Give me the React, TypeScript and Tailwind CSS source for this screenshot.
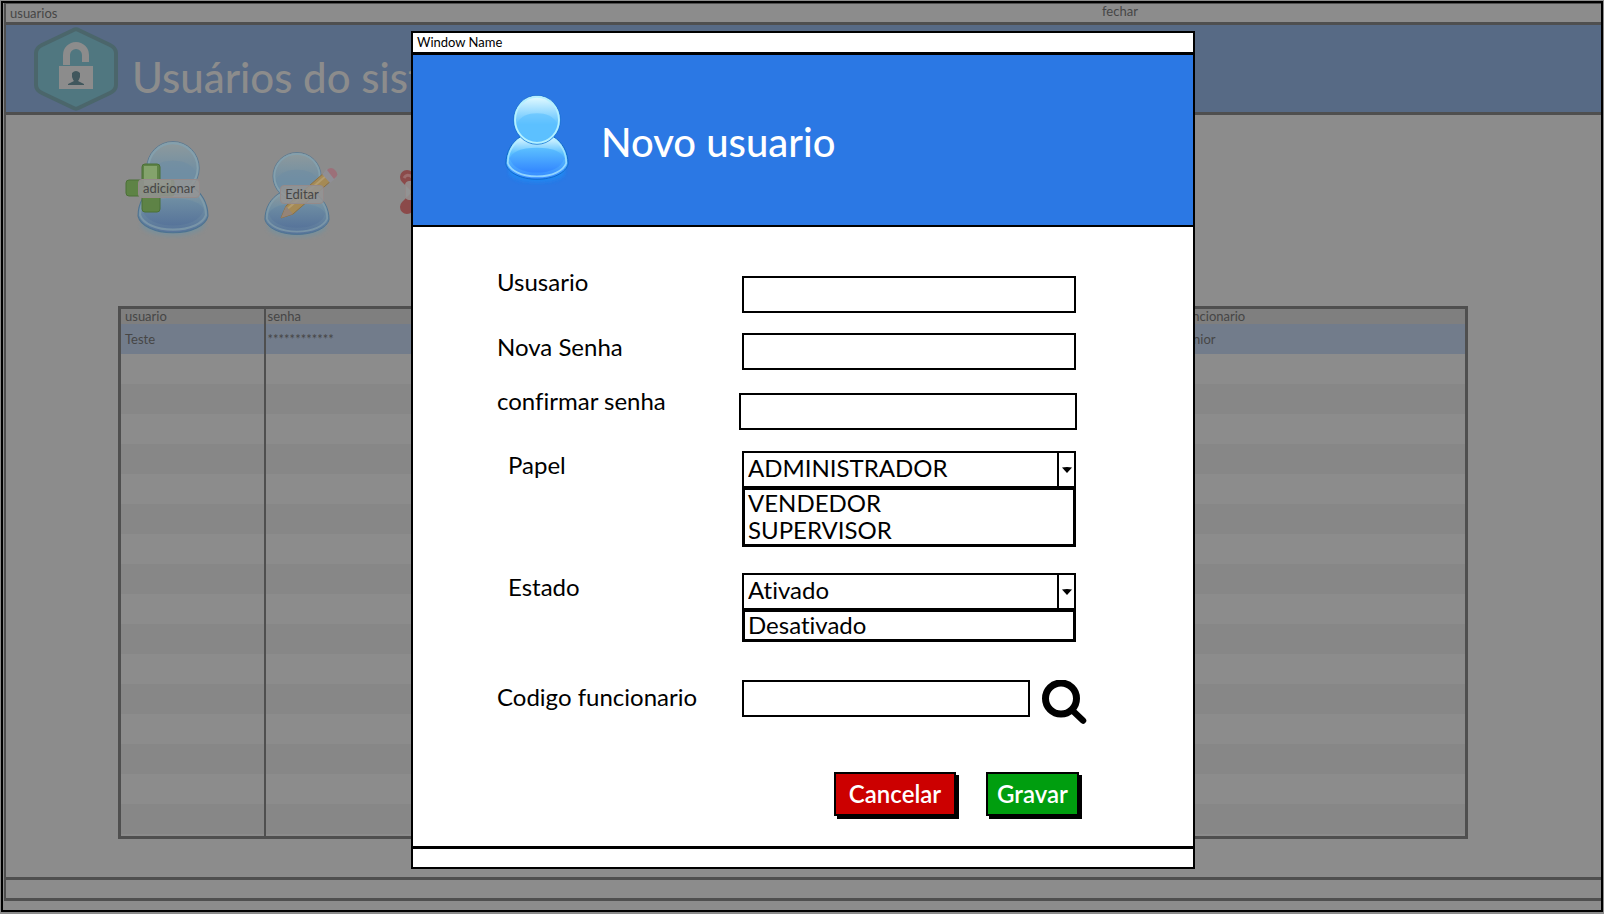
import { useId, type ReactNode } from "react";

type PersonProps = { className: string; muted?: boolean };

function Person({ className, muted = false }: PersonProps) {
  const id = useId();
  const c = muted
    ? { top: "#8f9a9c", mid: "#6f8ea3", low: "#57749a", edge: "#4d7391", rim: "#84a0ad", glow: "#74919e" }
    : { top: "#e8fdff", mid: "#5cc0ff", low: "#3286ff", edge: "#0a68c8", rim: "#b4f0ff", glow: "#1d8cf5" };
  return (
    <svg viewBox="0 0 70 94" className={className} aria-hidden="true" preserveAspectRatio="none">
      <defs>
        <linearGradient id={`${id}h`} x1="0" y1="0" x2="0" y2="1">
          <stop offset="0" stopColor={c.top} />
          <stop offset="0.6" stopColor={c.mid} />
          <stop offset="1" stopColor={c.mid} />
        </linearGradient>
        <linearGradient id={`${id}b`} x1="0" y1="0" x2="0" y2="1">
          <stop offset="0" stopColor={c.top} />
          <stop offset="0.4" stopColor={c.mid} />
          <stop offset="1" stopColor={c.low} />
        </linearGradient>
        <filter id={`${id}g`} x="-20%" y="-20%" width="140%" height="150%">
          <feGaussianBlur stdDeviation="2" />
        </filter>
      </defs>
      <ellipse cx="35" cy="80" rx="31" ry="11" fill={c.glow} opacity="0.8" filter={`url(#${id}g)`} />
      <path
        d="M18 43C7 49 1 60 1 72C3 81 17 88 35 88C53 88 67 81 69 72C69 60 63 49 52 43Z"
        fill={`url(#${id}b)`}
        stroke={c.edge}
        strokeWidth="1"
      />
      <path
        d="M18 45C8 51 3 61 3 71C6 79 18 85 35 85C52 85 64 79 67 71C67 61 62 51 52 45"
        fill="none"
        stroke={c.rim}
        strokeWidth="2"
        opacity="0.7"
      />
      <path d="M5 66C7 60 17 55 35 55C53 55 63 60 65 66C62 76 50 81 35 81C20 81 8 76 5 66Z" fill={`url(#${id}f)`} />
      <linearGradient id={`${id}f`} x1="0" y1="0" x2="0" y2="1">
        <stop offset="0" stopColor={c.mid} />
        <stop offset="1" stopColor={c.low} />
      </linearGradient>
      <circle cx="35" cy="26" r="25.5" fill={`url(#${id}h)`} stroke={c.edge} strokeWidth="0.7" />
      <circle cx="35" cy="26" r="24" fill="none" stroke={c.rim} strokeWidth="2" />
      <path d="M13 29C18 22 25 19 35 19C45 19 52 22 57 29C55 40 46 48 35 48C24 48 15 40 13 29Z" fill={c.mid} opacity="0.6" />
    </svg>
  );
}

function LockBadge() {
  return (
    <svg viewBox="0 0 84 84" className="size-[84px] shrink-0" aria-hidden="true">
      <path
        d="M39 3.200Q42 1.500 45 3.200L76 18Q82 21 82 26V58Q82 63 76 66L45 80.800Q42 82.500 39 80.800L8 66Q2 63 2 58V26Q2 21 8 18Z"
        fill="#507780"
        stroke="#4b666b"
        strokeWidth="4"
      />
      <path d="M32.500 38V28a9.500 9.500 0 0 1 19 0v7" fill="none" stroke="#8c8c8c" strokeWidth="7" />
      <rect x="25" y="39" width="34" height="23" fill="#8c8c8c" />
      <path d="M38 46q4-4 8 0v4q-1 3-2 4l6 3v1H34v-1l6-3q-1-1-2-4z" fill="#41575d" />
    </svg>
  );
}

function Tool({ label, children, className }: { label: string; children: ReactNode; className: string }) {
  return (
    <button type="button" className={`relative flex items-center justify-center pb-1 ${className}`}>
      {children}
      <span className="relative rounded-[4px] border border-[#948a8a] bg-[#949494]/85 px-1 text-[13px] leading-[17px]">
        {label}
      </span>
    </button>
  );
}

const field = "h-[37px] border-2 border-black bg-white px-1 text-2xl outline-none";

function Combo({ id, value, options }: { id: string; value: string; options: string[] }) {
  return (
    <div className="w-[334px]">
      <div className="relative">
        <select id={id} defaultValue={value} className={`${field} w-full appearance-none pb-1 leading-7`}>
          <option>{value}</option>
          {options.map((o) => (
            <option key={o}>{o}</option>
          ))}
        </select>
        <span className="pointer-events-none absolute inset-y-0 right-0 flex w-[19px] items-center justify-center border-2 border-black">
          <svg viewBox="0 0 10 6" className="h-[6px] w-[10px]" aria-hidden="true">
            <path d="M0 0.500Q5-0.500 10 0.500L5 6Z" />
          </svg>
        </span>
      </div>
      <ul role="listbox" aria-labelledby={`${id}-label`} className="border-[3px] border-t-2 border-black px-[3px] text-2xl leading-[25px]">
        {options.map((o) => (
          <li key={o} role="option" aria-selected="false" className="pb-0.5">
            {o}
          </li>
        ))}
      </ul>
    </div>
  );
}

function Row({ id, label, className = "", labelClass = "", children }: {
  id: string; label: string; className?: string; labelClass?: string; children: ReactNode;
}) {
  return (
    <div className={`flex items-start ${className}`}>
      <label id={`${id}-label`} htmlFor={id} className={`w-[245px] shrink-0 text-2xl leading-[22px] ${labelClass}`}>
        {label}
      </label>
      {children}
    </div>
  );
}

function Dialog() {
  return (
    <section role="dialog" aria-label="Novo usuario" className="w-[784px] border-2 border-black bg-white">
      <div className="h-[22px] border-b-[3px] border-black px-1 text-[13px] leading-[18px]">Window Name</div>
      <header className="flex h-[172px] items-center gap-8 border-b-2 border-black bg-[#2b78e4] pl-[92px]">
        <Person className="h-[90px] w-16" />
        <h2 className="pt-1 text-[40px] leading-none font-medium text-white">Novo usuario</h2>
      </header>
      <form className="pt-11 pl-[84px]" onSubmit={(e) => e.preventDefault()}>
        <Row id="usuario" label="Ususario">
          <input id="usuario" className={`${field} mt-[5px] w-[334px]`} />
        </Row>
        <Row id="senha" label="Nova Senha" className="mt-5" labelClass="pt-[3px]">
          <input id="senha" type="password" className={`${field} w-[334px]`} />
        </Row>
        <Row id="confirmar" label="confirmar senha" className="mt-5" labelClass="mr-[-3px]">
          <input id="confirmar" type="password" className={`${field} mt-[3px] w-[338px]`} />
        </Row>
        <Row id="papel" label="Papel" className="mt-[21px]" labelClass="pt-[3px] pl-[11px]">
          <Combo id="papel" value="ADMINISTRADOR" options={["VENDEDOR", "SUPERVISOR"]} />
        </Row>
        <Row id="estado" label="Estado" className="mt-[26px]" labelClass="pt-[3px] pl-[11px]">
          <Combo id="estado" value="Ativado" options={["Desativado"]} />
        </Row>
        <Row id="codigo" label="Codigo funcionario" className="mt-[38px]" labelClass="pt-[6px]">
          <input id="codigo" className={`${field} w-[288px]`} />
          <button type="button" aria-label="Buscar" className="ml-3">
            <svg viewBox="0 0 46 46" className="size-[46px]" fill="none" stroke="#000" aria-hidden="true">
              <circle cx="19" cy="18.500" r="15.500" strokeWidth="7" />
              <path d="M31 31L41 40.500" strokeWidth="6.500" strokeLinecap="round" />
            </svg>
          </button>
        </Row>
        <div className="mt-[46px] mb-[30px] flex gap-[30px] pl-[337px] text-2xl font-semibold text-white">
          <button type="button" className="h-11 w-[122px] border-2 border-black bg-[#cc0000] shadow-[3px_3px_0_#000]">
            Cancelar
          </button>
          <button type="submit" className="h-11 w-[93px] border-2 border-black bg-[#009e0f] shadow-[3px_3px_0_#000]">
            Gravar
          </button>
        </div>
      </form>
      <footer className="h-[21px] border-t-[3px] border-black" />
    </section>
  );
}

const emptyRows = Array.from({ length: 16 }, (_, i) => i);

export default function App() {
  return (
    <div className="relative flex min-h-screen flex-col bg-[#8c8c8c] p-px pb-0.5 font-['Lato',sans-serif] text-black [font-variant-ligatures:none]">
      <main className="flex flex-1 flex-col border-2 border-black pb-[9px] pl-px text-[#464646]">
        <div className="flex flex-1 flex-col border-[#4f4f4f] border-t border-b-[3px] border-l-2">
          <div className="flex h-[18px] items-center text-[13px] leading-4">
            <h1 className="w-[1096px] shrink-0 pl-1">usuarios</h1>
            <button type="button" className="self-start leading-[14px]">fechar</button>
          </div>
          <header className="flex h-[93px] items-center gap-3.5 border-y-[3px] border-[#4f4f4f] bg-[#576a85] pl-7">
            <LockBadge />
            <p className="pt-4 text-[42px] leading-none font-medium text-[#8c8c8c]">Usuários do sistema</p>
          </header>
          <nav className="flex h-[191px] items-start pt-[26px] pl-[119px]">
            <Tool label="adicionar" className="mr-[51px] h-[98px] w-[88px]">
              <Person muted className="absolute top-0 right-[4px] h-[98px] w-[72px]" />
              <svg viewBox="0 0 50 50" className="absolute top-[22px] left-0 size-[50px]" aria-hidden="true">
                <path d="M20 1h12q3 0 3 3v13h12q2 0 2 2v12q0 2-2 2H35v13q0 3-3 3H20q-3 0-3-3V33H4q-3 0-3-3V20q0-3 3-3h13V4q0-3 3-3z" fill="#5e8346" stroke="#4b7036" />
                <path d="M20 3h12v14h14v5H19V3" fill="#84a36c" />
              </svg>
            </Tool>
            <Tool label="Editar" className="mt-[11px] mr-[59px] h-[88px] w-[76px]">
              <Person muted className="absolute top-0 left-0 h-[88px] w-[66px]" />
              <svg viewBox="0 0 58 52" className="absolute top-[15px] left-[16px] h-[52px] w-[58px]" aria-hidden="true">
                <path d="M1 51L6 39L45 5L52 13L13 47Z" fill="#a58a55" stroke="#8c7043" />
                <path d="M5 44L47 8" stroke="#b39c6e" strokeWidth="2" />
                <path d="M1 51L6 39L13 47Z" fill="#958477" />
                <path d="M42 7L47 2L56 11L50 16Z" fill="#8f8f96" />
                <path d="M47 3Q51-1 55 3T56 10L54 12Z" fill="#9c7079" />
              </svg>
            </Tool>
            <Tool label="Excluir" className="mt-[28px] h-[46px] w-[60px]">
              <svg viewBox="0 0 46 46" className="absolute top-0 left-0 size-[46px]" aria-hidden="true">
                <path d="M8 8L38 38M38 8L8 38" stroke="#8b4a4a" strokeWidth="14" strokeLinecap="round" />
                <path d="M5 9Q8 4 13 8" fill="none" stroke="#9c6c6c" strokeWidth="3" />
              </svg>
            </Tool>
          </nav>
          <div className="mr-[133px] ml-[112px] flex-1">
            <table className="w-full table-fixed border-collapse border-[3px] border-[#4f4f4f] text-left text-[13px] leading-[14px]">
              <colgroup>
                <col className="w-[145px]" />
                <col />
                <col className="w-[290px]" />
              </colgroup>
              <thead className="bg-[#7f7f7f]">
                <tr className="h-4">
                  <th className="border-r-2 border-[#4f4f4f] p-0 pl-1 font-normal">usuario</th>
                  <th className="p-0 pl-0.5 font-normal">senha</th>
                  <th className="p-0 pl-1 font-normal">funcionario</th>
                </tr>
              </thead>
              <tbody>
                <tr className="h-[30px] bg-[#727c8b]">
                  <td className="border-r-2 border-[#4f4f4f] p-0 pl-1">Teste</td>
                  <td className="p-0 pl-0.5">************</td>
                  <td className="p-0 pl-1">Junior</td>
                </tr>
                {emptyRows.map((i) => (
                  <tr key={i} className="h-[30px] odd:bg-[#878787] even:bg-[#8c8c8c]">
                    <td className="border-r-2 border-[#4f4f4f] p-0" />
                    <td className="p-0" />
                    <td className="p-0" />
                  </tr>
                ))}
                <tr className="h-1">
                  <td className="border-r-2 border-[#4f4f4f] p-0" />
                  <td className="p-0" />
                  <td className="p-0" />
                </tr>
              </tbody>
            </table>
          </div>
          <footer className="h-[21px] border-t-[3px] border-[#4f4f4f]" />
        </div>
      </main>
      <div className="absolute inset-x-0 top-0 flex justify-center pt-[31px] pl-0.5">
        <Dialog />
      </div>
    </div>
  );
}
